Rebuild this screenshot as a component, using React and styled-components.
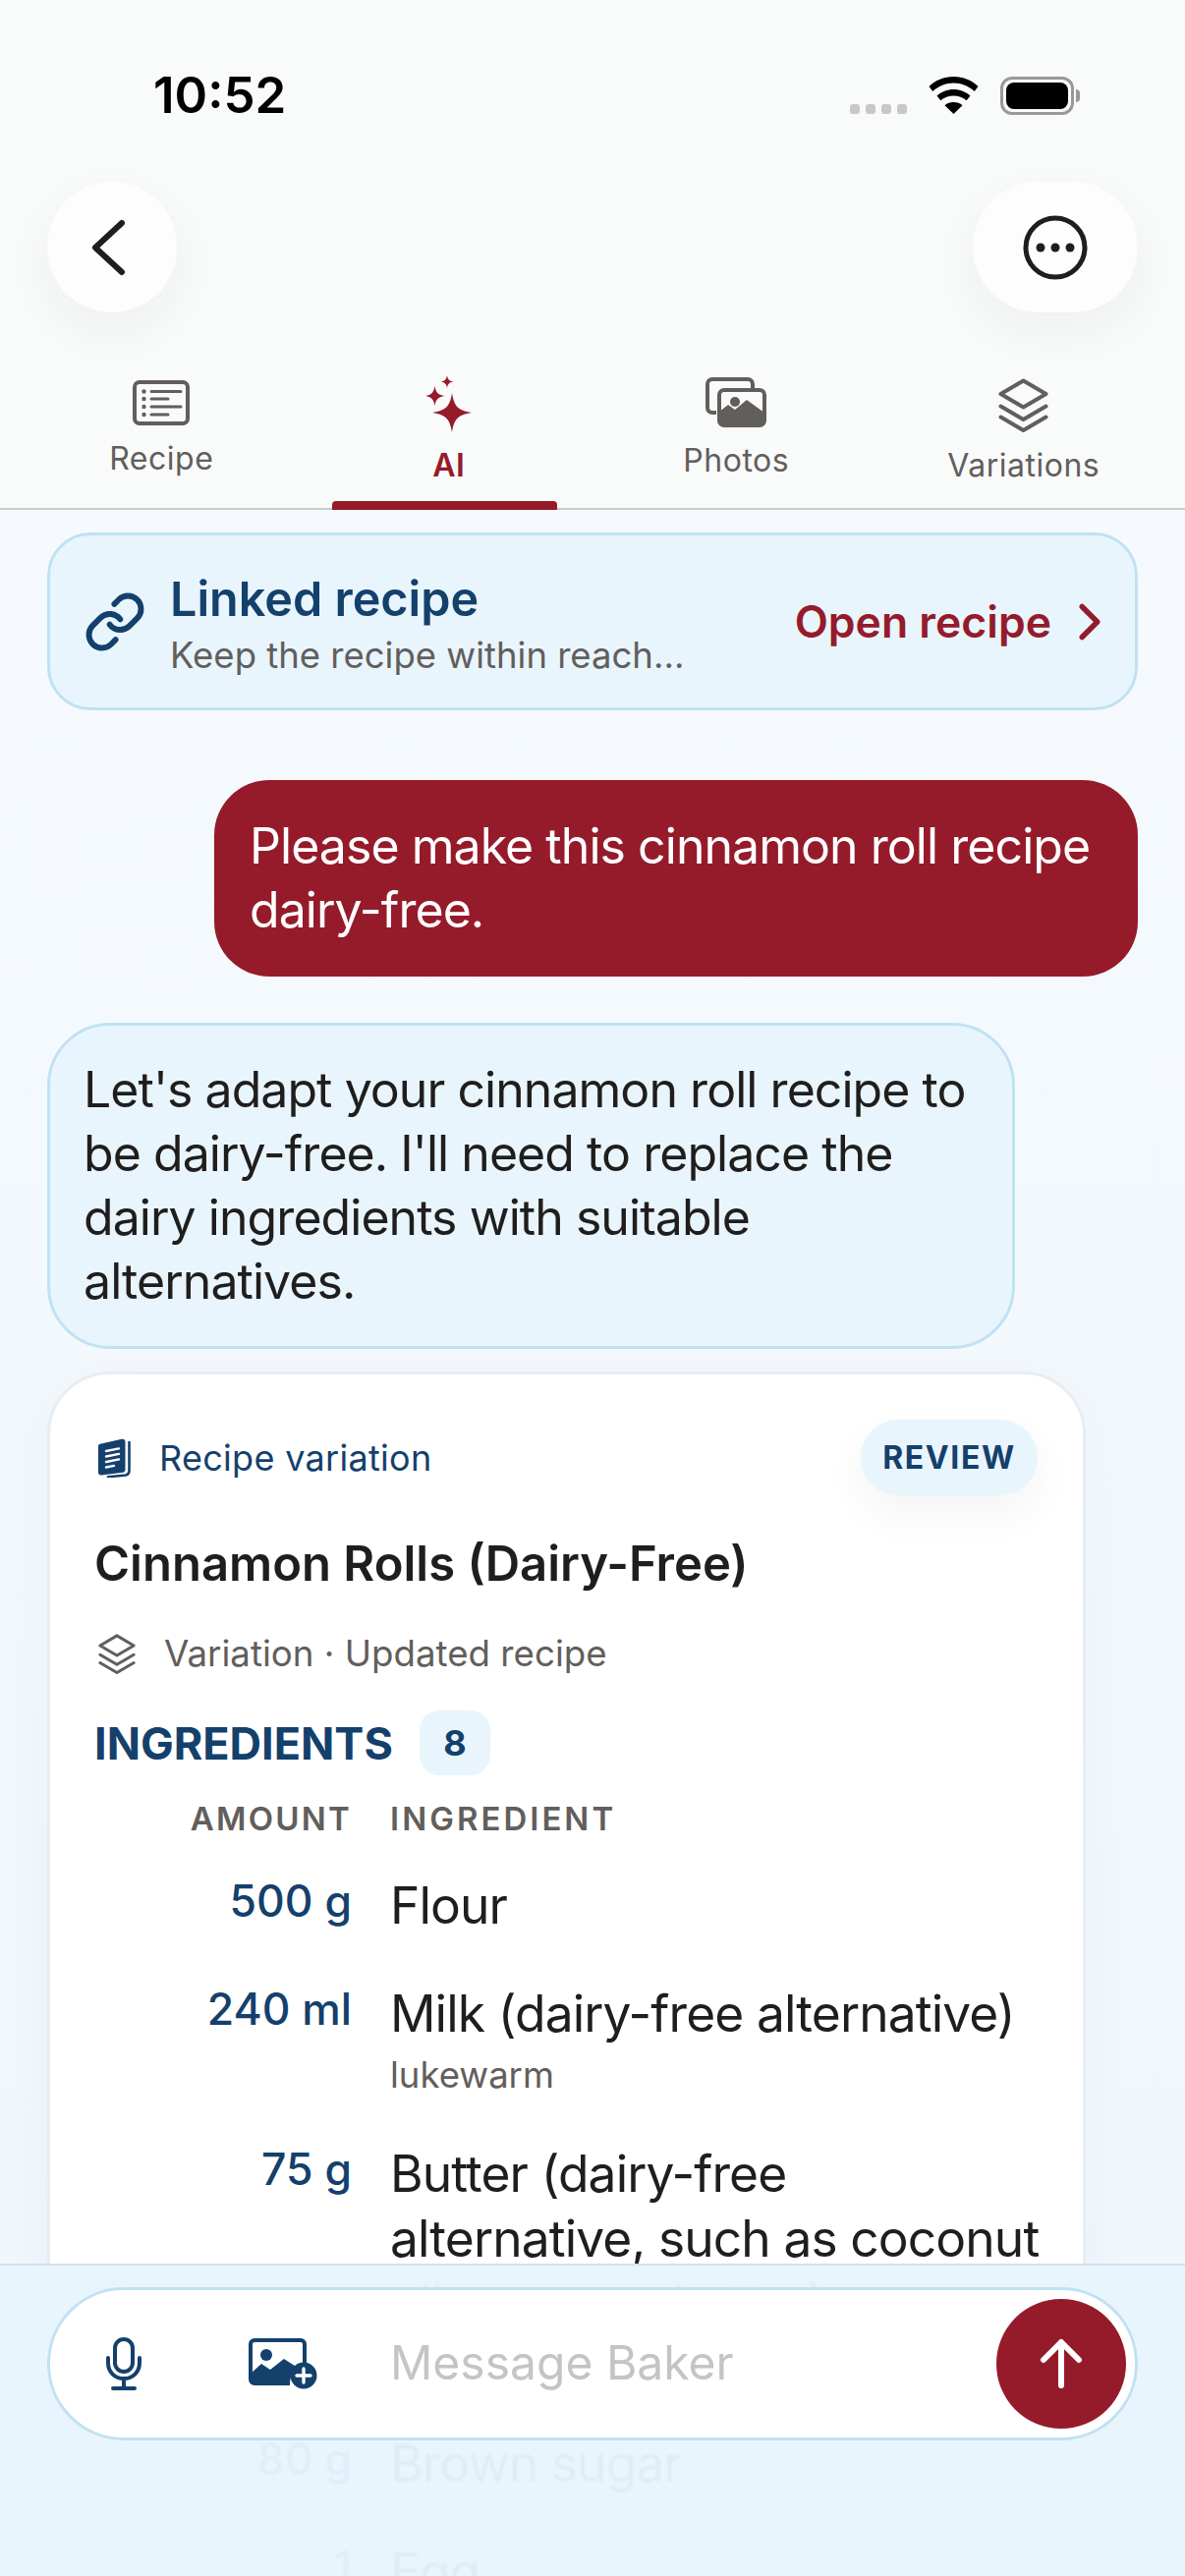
import styled, { createGlobalStyle } from "styled-components";
import { ChevronRight, Link } from "lucide-react";

const GlobalStyle = createGlobalStyle`
  html, body { margin: 0; padding: 0; }
  body { font-family: Inter, "Noto Sans", sans-serif; background: #f9fafa; }
`;

const red = "#951b2b";
const navy = "#14406c";
const gray = "#625e5c";
const ink = "#201e1d";
const tint = "#e9f5fd";

const ingredients = [
  { amount: "500 g", name: "Flour" },
  { amount: "240 ml", name: "Milk (dairy-free alternative)", note: "lukewarm" },
  { amount: "75 g", name: "Butter (dairy-free alternative, such as coconut oil or vegan butter)", note: "melted" },
  { amount: "80 g", name: "Brown sugar" },
  { amount: "1", name: "Egg" },
];

const RecipeIcon = () => (
  <svg width="58" height="46" viewBox="0 0 58 46" fill="none" stroke={gray}>
    <rect x="2" y="2" width="54" height="42" rx="5" strokeWidth="4" />
    <g strokeWidth="3" strokeLinecap="round">
      <path d="M19 11.5h30M19 19h17M19 27h30M19 35h17" />
    </g>
    <g fill={gray} stroke="none">
      <circle cx="11.5" cy="11.5" r="2.2" />
      <circle cx="11.5" cy="19" r="2.2" />
      <circle cx="11.5" cy="27" r="2.2" />
      <circle cx="11.5" cy="35" r="2.2" />
    </g>
  </svg>
);

const SparkleIcon = () => (
  <svg width="47" height="58" viewBox="0 0 47 58" fill={red}>
    <path d="M27 18C29 31 33 36 47 38C33 40 29 45 27 58C25 45 21 40 7 38C21 36 25 31 27 18z" />
    <path d="M9.500 11C10.500 17 12.500 20 19.500 21C12.500 22 10.500 25 9.500 31C8.500 25 6.500 22 0 21C6.500 20 8.500 17 9.500 11z" />
    <path d="M22 0C22.600 3.800 23.800 5.600 28 6.500C23.800 7.400 22.600 9.200 22 13C21.400 9.200 20.200 7.400 16 6.500C20.200 5.600 21.400 3.800 22 0z" />
  </svg>
);

const PhotosIcon = () => (
  <svg width="62" height="51" viewBox="0 0 62 51" fill="none">
    <path d="M11 36H7a5 5 0 0 1-5-5V7a5 5 0 0 1 5-5h36a5 5 0 0 1 5 5v5" stroke={gray} strokeWidth="4" />
    <rect x="14" y="13" width="46" height="36" rx="5" stroke={gray} strokeWidth="4" />
    <path d="M14 35l9-7 7 5 12-10 18 13v8a5 5 0 0 1-5 5H19a5 5 0 0 1-5-5z" fill={gray} />
    <circle cx="30" cy="25" r="5" fill={gray} />
  </svg>
);

const LayersIcon = ({ size = 51, tall = 55 }) => (
  <svg width={size} height={tall} viewBox="0 0 51 55" fill="none" stroke={gray} strokeWidth="4" strokeLinejoin="round" strokeLinecap="round">
    <path d="M25.500 2.500L48.500 16 25.500 29.500 2.500 16z" />
    <path d="M2.500 28.500l23 13.500 23-13.500" />
    <path d="M2.500 39.500l23 13.500 23-13.500" />
  </svg>
);

const BookIcon = () => (
  <svg width="34" height="40" viewBox="0 0 34 40" fill="none">
    <path d="M3 5.500L24 .8c2-.4 3.500.8 3.500 2.800V32c0 1.500-.8 2.500-2.500 2.800L3 37.500c-1.800 0-3-1-3-3V8c0-1.300 1.200-2.200 3-2.500z" fill={navy} />
    <path d="M31.500 4v29c0 2.500-1.200 4-3.500 4.500L10 39.200" stroke={navy} strokeWidth="2.600" strokeLinecap="round" />
    <path d="M8 13l13-2.600M8 18.500l13-2.600M8 24l13-2.600M8 29.500l8-1.600" stroke="#fff" strokeWidth="2.400" strokeLinecap="round" />
  </svg>
);

const MicIcon = () => (
  <svg width="36" height="54" viewBox="0 0 36 54" fill="none" stroke={navy} strokeWidth="4" strokeLinecap="round">
    <rect x="9" y="2" width="18" height="33" rx="9" />
    <path d="M2 21v5c0 9.500 7 16 16 16s16-6.500 16-16v-5M18 42v9M7 52h22" />
  </svg>
);

const AddImageIcon = () => (
  <svg width="70" height="52" viewBox="0 0 70 52" fill="none">
    <path d="M57 26V6a4 4 0 0 0-4-4H6a4 4 0 0 0-4 4v36a4 4 0 0 0 4 4h36" stroke={navy} strokeWidth="4" />
    <path d="M2 36l11-10 9 6 14-11 14 9c-4 2-8 8-8 17H6a4 4 0 0 1-4-4z" fill={navy} />
    <circle cx="18" cy="17" r="6" fill={navy} />
    <circle cx="56" cy="38" r="13.500" fill={navy} />
    <path d="M56 31v14M49 38h14" stroke="#fff" strokeWidth="3.400" strokeLinecap="round" />
  </svg>
);

const App = () => (
  <>
    <GlobalStyle />
    <Screen>
      <Header>
        <StatusBar>
          <Clock>10:52</Clock>
          <StatusIcons>
            <Dots>
              <i /><i /><i /><i />
            </Dots>
            <svg width="51" height="38" viewBox="0 0 50 38">
              <path d="M25 0c10 0 18.500 3.800 25 10l-3.800 5C40.500 9.700 33 6.500 25 6.500S9.500 9.700 3.800 15L0 10C6.500 3.800 15 0 25 0z" />
              <path d="M25 13c6.500 0 12.500 2.500 17 6.500l-3.800 4.800C34.600 21.200 30 19.500 25 19.500s-9.600 1.700-13.200 4.800L8 19.500C12.500 15.500 18.500 13 25 13z" />
              <path d="M25 26c3.500 0 6.700 1.200 9 3.200L25 38l-9-8.800c2.300-2 5.500-3.200 9-3.200z" />
            </svg>
            <Battery><BatteryFill /></Battery>
          </StatusIcons>
        </StatusBar>
        <Toolbar>
          <RoundButton>
            <BackGlyph width="38" height="58" viewBox="0 0 38 58" fill="none" stroke={ink} strokeWidth="6" strokeLinecap="round" strokeLinejoin="round">
              <path d="M33 4L6 29l27 25" />
            </BackGlyph>
          </RoundButton>
          <RoundButton $wide>
            <svg width="66" height="66" viewBox="0 0 66 66" fill="none">
              <circle cx="33" cy="33" r="30" stroke={ink} strokeWidth="5" />
              <circle cx="18" cy="33" r="4.500" fill={ink} />
              <circle cx="33" cy="33" r="4.500" fill={ink} />
              <circle cx="48" cy="33" r="4.500" fill={ink} />
            </svg>
          </RoundButton>
        </Toolbar>
        <TabBar>
          <Tab $top={15}><RecipeIcon /><TabLabel>Recipe</TabLabel></Tab>
          <Tab $top={10} $active><SparkleIcon /><TabLabel $active>AI</TabLabel></Tab>
          <Tab $top={12}><PhotosIcon /><TabLabel>Photos</TabLabel></Tab>
          <Tab $top={13}><LayersIcon /><TabLabel>Variations</TabLabel></Tab>
        </TabBar>
      </Header>

      <Chat>
        <LinkCard>
          <Link size={64} strokeWidth={2.2} color={navy} />
          <LinkText>
            <LinkTitle>Linked recipe</LinkTitle>
            <LinkSub>Keep the recipe within reach...</LinkSub>
          </LinkText>
          <OpenLink>Open recipe</OpenLink>
          <ChevronRight size={62} strokeWidth={2.1} color={red} />
        </LinkCard>

        <UserBubble>Please make this cinnamon roll recipe dairy-free.</UserBubble>
        <BotBubble>Let's adapt your cinnamon roll recipe to be dairy-free. I'll need to replace the dairy ingredients with suitable alternatives.</BotBubble>

        <ResultCard>
          <CardTop>
            <BookIcon />
            <Kind>Recipe variation</Kind>
            <Review>REVIEW</Review>
          </CardTop>
          <CardTitle>Cinnamon Rolls (Dairy-Free)</CardTitle>
          <Meta>
            <LayersIcon size={38} tall={41} />
            <span>Variation · Updated recipe</span>
          </Meta>
          <Section>
            <SectionName>INGREDIENTS</SectionName>
            <Count>8</Count>
          </Section>
          <Table>
            <ColHead $right>AMOUNT</ColHead>
            <ColHead>INGREDIENT</ColHead>
            {ingredients.map((row) => (
              <Row key={row.name}>
                <Amount>{row.amount}</Amount>
                <div>
                  <Name>{row.name}</Name>
                  {row.note && <Note>{row.note}</Note>}
                </div>
              </Row>
            ))}
          </Table>
        </ResultCard>
      </Chat>

      <Composer>
        <InputPill>
          <MicSlot><MicIcon /></MicSlot>
          <AddSlot><AddImageIcon /></AddSlot>
          <Placeholder>Message Baker</Placeholder>
          <SendButton>
            <svg width="44" height="52" viewBox="0 0 44 52" fill="none" stroke="#fff" strokeWidth="6" strokeLinecap="round" strokeLinejoin="round">
              <path d="M22 48V4M4 22L22 4l18 18" />
            </svg>
          </SendButton>
        </InputPill>
      </Composer>
    </Screen>
  </>
);

export default App;

const Screen = styled.div`
  position: relative;
  width: 1206px;
  height: 2622px;
  overflow: hidden;
  background: linear-gradient(180deg, #f7fbff 0%, #f0f6fb 100%);
`;

const Header = styled.header`
  background: #f9fafa;
`;

const StatusBar = styled.div`
  height: 185px;
  display: flex;
  justify-content: space-between;
  align-items: flex-start;
  padding: 66px 113px 0 156px;
  box-sizing: border-box;
`;

const Clock = styled.div`
  font-size: 51px;
  line-height: 62px;
  font-weight: 600;
  color: #000;
`;

const StatusIcons = styled.div`
  display: flex;
  align-items: flex-start;
  gap: 22px;
  padding-top: 12px;
`;

const Dots = styled.div`
  display: flex;
  gap: 6px;
  padding-top: 28px;
  i {
    display: block;
    width: 10px;
    height: 10px;
    border-radius: 3px;
    background: #c8c8c8;
  }
`;

const Battery = styled.div`
  position: relative;
  width: 75px;
  height: 39px;
  box-sizing: border-box;
  border: 3px solid #999;
  border-radius: 12px;
  padding: 3px;
  &::after {
    content: "";
    position: absolute;
    right: -9px;
    top: 10px;
    width: 4px;
    height: 13px;
    border-radius: 0 4px 4px 0;
    background: #999;
  }
`;

const BatteryFill = styled.div`
  height: 100%;
  background: #000;
  border-radius: 8px;
`;

const Toolbar = styled.div`
  display: flex;
  justify-content: space-between;
  padding: 0 48px;
`;

const RoundButton = styled.div`
  width: ${(p) => (p.$wide ? 168 : 132)}px;
  height: 133px;
  border-radius: 67px;
  background: #fdfdfd;
  display: flex;
  align-items: center;
  justify-content: center;
  box-shadow: 0 18px 50px rgba(40, 40, 40, 0.05);
`;

const BackGlyph = styled.svg`
  margin-right: 8px;
`;

const TabBar = styled.nav`
  margin-top: 54px;
  height: 147px;
  box-sizing: border-box;
  padding: 0 18px;
  display: grid;
  grid-template-columns: repeat(4, 1fr);
  border-bottom: 2px solid #c8cbd0;
`;

const Tab = styled.div`
  position: relative;
  display: flex;
  flex-direction: column;
  align-items: center;
  gap: 14px;
  padding-top: ${(p) => p.$top}px;
  svg { display: block; flex: none; }
  ${(p) =>
    p.$active &&
    `&::after {
      content: "";
      position: absolute;
      left: 27px;
      bottom: -2px;
      width: 229px;
      height: 9px;
      border-radius: 4px 4px 0 0;
      background: ${red};
    }`}
`;

const TabLabel = styled.div`
  font-size: 32px;
  line-height: 40px;
  letter-spacing: 0.5px;
  font-weight: ${(p) => (p.$active ? 600 : 400)};
  color: ${(p) => (p.$active ? red : gray)};
`;

const Chat = styled.main`
  padding: 23px 48px 0;
  display: flex;
  flex-direction: column;
  align-items: flex-start;
`;

const LinkCard = styled.div`
  width: 100%;
  box-sizing: border-box;
  height: 181px;
  padding: 0 15px 0 34px;
  display: flex;
  align-items: center;
  background: ${tint};
  border: 3px solid #c0e2f2;
  border-radius: 44px;
`;

const LinkText = styled.div`
  flex: 1;
  margin-left: 24px;
  padding-top: 6px;
`;

const LinkTitle = styled.div`
  font-size: 48.5px;
  line-height: 60px;
  font-weight: 600;
  color: ${navy};
`;

const LinkSub = styled.div`
  margin-top: 2px;
  font-size: 36.5px;
  line-height: 50px;
  color: ${gray};
`;

const OpenLink = styled.div`
  font-size: 44.5px;
  font-weight: 600;
  color: ${red};
  margin-right: 8px;
`;

const UserBubble = styled.div`
  align-self: flex-end;
  width: 940px;
  box-sizing: border-box;
  margin-top: 71px;
  padding: 35px 36px;
  background: ${red};
  color: #fff;
  font-size: 50px;
  letter-spacing: -0.95px;
  line-height: 65px;
  border-radius: 56px;
`;

const BotBubble = styled.div`
  width: 985px;
  box-sizing: border-box;
  margin-top: 47px;
  padding: 33px 34px;
  background: ${tint};
  border: 3px solid #c0e2f2;
  color: ${ink};
  font-size: 50px;
  letter-spacing: -0.95px;
  line-height: 65px;
  border-radius: 64px;
`;

const ResultCard = styled.section`
  width: 1057px;
  box-sizing: border-box;
  margin-top: 23px;
  padding: 46px 36px 60px 45px;
  background: #fff;
  border: 3px solid #e8edf2;
  border-radius: 64px;
  box-shadow: 0 10px 50px rgba(40, 70, 100, 0.04);
`;

const CardTop = styled.div`
  display: flex;
  align-items: center;
  height: 77px;
  padding-left: 4px;
`;

const Kind = styled.div`
  flex: 1;
  margin-left: 28px;
  font-size: 36px;
  letter-spacing: 0.3px;
  color: ${navy};
`;

const Review = styled.div`
  width: 180px;
  height: 77px;
  margin-right: 10px;
  border-radius: 38px;
  background: ${tint};
  display: flex;
  align-items: center;
  justify-content: center;
  font-size: 32px;
  font-weight: 700;
  letter-spacing: 1.6px;
  color: ${navy};
  box-shadow: 0 18px 40px rgba(40, 40, 40, 0.05);
`;

const CardTitle = styled.h2`
  margin: 39px 0 0;
  font-size: 49px;
  line-height: 62px;
  font-weight: 600;
  color: ${ink};
`;

const Meta = styled.div`
  margin-top: 38px;
  display: flex;
  align-items: center;
  gap: 29px;
  padding-left: 4px;
  font-size: 36.7px;
  line-height: 44px;
  color: ${gray};
  svg { flex: none; }
`;

const Section = styled.div`
  margin-top: 36px;
  display: flex;
  align-items: center;
  gap: 27px;
`;

const SectionName = styled.div`
  font-size: 45px;
  font-weight: 700;
  color: ${navy};
`;

const Count = styled.div`
  width: 72px;
  height: 66px;
  border-radius: 20px;
  background: ${tint};
  display: flex;
  align-items: center;
  justify-content: center;
  font-size: 36px;
  font-weight: 700;
  color: ${navy};
`;

const Table = styled.div`
  margin-top: 23px;
  display: grid;
  grid-template-columns: 262px 1fr;
  column-gap: 39px;
`;

const ColHead = styled.div`
  font-size: 33px;
  line-height: 42px;
  font-weight: 600;
  letter-spacing: ${(p) => (p.$right ? 2.2 : 3)}px;
  margin-bottom: -10px;
  color: ${gray};
  text-align: ${(p) => (p.$right ? "right" : "left")};
`;

const Row = styled.div`
  grid-column: 1 / -1;
  display: grid;
  grid-template-columns: 262px 1fr;
  column-gap: 39px;
  margin-top: 44px;
`;

const Amount = styled.div`
  font-size: 44.5px;
  line-height: 58px;
  font-weight: 500;
  color: ${navy};
  text-align: right;
`;

const Name = styled.div`
  font-size: 51.5px;
  letter-spacing: -0.9px;
  line-height: 66px;
  color: ${ink};
`;

const Note = styled.div`
  margin-top: 7px;
  font-size: 36.5px;
  line-height: 46px;
  color: ${gray};
`;

const Composer = styled.div`
  position: absolute;
  left: 0;
  right: 0;
  top: 2304px;
  bottom: 0;
  padding: 22px 48px 0;
  box-sizing: border-box;
  background: rgba(232, 245, 253, 0.96);
  backdrop-filter: blur(1px);
  border-top: 2px solid #d2e2ec;
`;

const InputPill = styled.div`
  height: 156px;
  box-sizing: border-box;
  border: 3px solid #c0e2f2;
  border-radius: 78px;
  background: #fff;
  display: flex;
  align-items: center;
  padding: 0 9px 0 0;
`;

const MicSlot = styled.div`
  width: 150px;
  display: flex;
  justify-content: center;
`;

const AddSlot = styled.div`
  width: 196px;
  display: flex;
  padding-left: 52px;
  box-sizing: border-box;
`;

const Placeholder = styled.div`
  flex: 1;
  font-size: 48px;
  color: #c4c4c6;
  padding-bottom: 4px;
`;

const SendButton = styled.div`
  width: 132px;
  height: 132px;
  border-radius: 50%;
  background: ${red};
  display: flex;
  align-items: center;
  justify-content: center;
`;
